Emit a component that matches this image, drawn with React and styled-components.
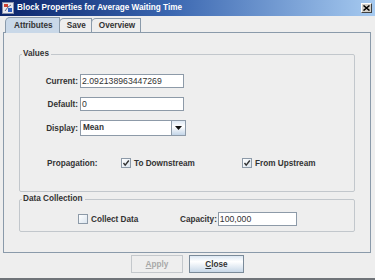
import React from "react";
import styled, { createGlobalStyle } from "styled-components";

const Global = createGlobalStyle`
  html, body { margin: 0; padding: 0; background: #eeeeee; }
  body { font-family: "Liberation Sans", Arial, sans-serif; }
  * { box-sizing: border-box; }
`;

const Window = styled.div`
  width: 375px;
  height: 280px;
  display: flex;
  flex-direction: column;
  background: #eeeeee;
  border-bottom: 2px solid #6f7378;
  overflow: hidden;
`;

const TitleBar = styled.div`
  height: 16px;
  display: flex;
  align-items: center;
  padding: 0 3px 0 2px;
  background: linear-gradient(to right, #0a246a 0%, #3a66b0 45%, #a6caf0 100%);
`;

const TitleText = styled.span`
  flex: 1;
  margin-left: 3px;
  color: #ffffff;
  font-weight: bold;
  font-size: 8.2px;
  line-height: 12px;
  white-space: nowrap;
`;

const CloseBtn = styled.div`
  width: 11px;
  height: 10px;
  display: flex;
  align-items: center;
  justify-content: center;
  background: #d4d0c8;
  border: 1px solid;
  border-color: #ffffff #404040 #404040 #ffffff;
`;

const Body = styled.div`
  flex: 1;
  display: flex;
  flex-direction: column;
  padding: 1px 4px 0 3px;
`;

const TabRow = styled.div`
  display: flex;
  height: 15px;
  padding-left: 2px;
  align-items: flex-end;
`;

const Tab = styled.div`
  padding: 0 ${(p) => p.$pad}px 0 ${(p) => p.$pad + 2}px;
  display: flex;
  align-items: center;
  font-size: 8.2px;
  font-weight: bold;
  color: #333333;
  background: ${(p) => (p.$active ? "#c9d8e8" : "#eeeeee")};
  border: 1px solid #8a9aaa;
  border-bottom: none;
  border-top-left-radius: 5px;
  margin-right: -1px;
  position: relative;
  z-index: ${(p) => (p.$active ? 2 : 1)};
  margin-bottom: ${(p) => (p.$active ? "-1px" : "0")};
  height: ${(p) => (p.$active ? "16px" : "14px")};
`;

const TabPanel = styled.div`
  height: 221px;
  border: 1px solid #8a9aaa;
  background: #eeeeee;
  padding: 16px 15px 0 15px;
  display: flex;
  flex-direction: column;
`;

const Group = styled.fieldset`
  margin: 0;
  border: 1px solid #c2c7cc;
  border-radius: 2px;
  padding: ${(p) => p.$pad};
  min-width: 0;
`;

const Legend = styled.legend`
  margin-left: 2px;
  padding: 0 2px 0 1px;
  font-size: 8.2px;
  line-height: 10px;
  font-weight: bold;
  color: #333333;
`;

const FormGrid = styled.div`
  display: grid;
  grid-template-columns: 58px 104px;
  column-gap: 2px;
  row-gap: 9px;
  align-items: center;
`;

const Label = styled.span`
  font-size: 8.2px;
  font-weight: bold;
  color: #333333;
  text-align: ${(p) => (p.$left ? "left" : "right")};
  white-space: nowrap;
`;

const Field = styled.div`
  height: 14px;
  width: ${(p) => p.$w || "104px"};
  background: #ffffff;
  border: 1px solid #8d9aa8;
  padding-left: 1px;
  font-size: 8.7px;
  line-height: 12px;
  color: #333333;
  white-space: nowrap;
  overflow: hidden;
`;

const Combo = styled.div`
  height: 16px;
  width: 106px;
  display: flex;
  background: #ffffff;
  border: 1px solid #8d9aa8;
`;

const ComboText = styled.span`
  flex: 1;
  padding-left: 2px;
  font-size: 8.2px;
  font-weight: bold;
  line-height: 14px;
  color: #333333;
`;

const ComboArrow = styled.div`
  width: 14px;
  display: flex;
  align-items: center;
  justify-content: center;
  border-left: 1px solid #8d9aa8;
  background: linear-gradient(#dfe9f4, #ffffff 40%, #c3d5e8);
`;

const PropRow = styled.div`
  display: flex;
  align-items: center;
  margin-top: 21px;
  padding-left: 27px;
  height: 12px;
`;

const Cell = styled.div`
  width: ${(p) => p.$w}px;
  flex: none;
  display: flex;
  align-items: center;
`;

const Box = styled.div`
  width: 10px;
  height: 10px;
  flex: none;
  border: 1px solid #8d9aa8;
  background: linear-gradient(135deg, #ffffff, #dbe5ef);
  display: flex;
  align-items: center;
  justify-content: center;
  margin-right: 3px;
`;

const CheckText = styled.span`
  font-size: 8.2px;
  font-weight: bold;
  color: #333333;
  white-space: nowrap;
`;

const DataRow = styled.div`
  display: flex;
  align-items: center;
  padding-left: 58px;
  height: 14px;
`;

const Footer = styled.div`
  display: flex;
  justify-content: center;
  gap: 6px;
  padding-top: 2px;
  padding-left: 1px;
`;

const Button = styled.div`
  width: ${(p) => p.$w}px;
  height: 18px;
  display: flex;
  align-items: center;
  justify-content: center;
  font-size: 8.2px;
  font-weight: bold;
  color: ${(p) => (p.$disabled ? "#a8a8a8" : "#333333")};
  border: 1px solid ${(p) => (p.$disabled ? "#c4c8cc" : "#7a8a99")};
  background: ${(p) =>
    p.$disabled ? "#eeeeee" : "linear-gradient(#dde8f3, #ffffff 35%, #c8d8e8)"};
  u { text-decoration: underline; }
`;

const Check = () => (
  <svg width="8" height="8" viewBox="0 0 8 8">
    <path d="M1.5 4 L3.2 6.2 L6.8 1.5" stroke="#333" strokeWidth="1.4" fill="none" />
  </svg>
);

export default function App() {
  return (
    <>
      <Global />
      <Window>
        <TitleBar>
          <svg width="12" height="12" viewBox="0 0 12 12">
            <rect x="0.5" y="0.5" width="11" height="11" fill="#e8e8f0" stroke="#8890a8" />
            <rect x="2" y="2" width="4" height="3" fill="#d04030" />
            <rect x="6" y="6" width="4" height="4" fill="#3060c0" />
            <path d="M3 9 L6 5 L9 3" stroke="#606880" strokeWidth="1" fill="none" />
          </svg>
          <TitleText>Block Properties for Average Waiting Time</TitleText>
          <CloseBtn>
            <svg width="7" height="6" viewBox="0 0 7 6">
              <path d="M0.5 0.5 L6.5 5.5 M6.5 0.5 L0.5 5.5" stroke="#000" strokeWidth="1.5" />
            </svg>
          </CloseBtn>
        </TitleBar>
        <Body>
          <TabRow>
            <Tab $active $pad={6}>Attributes</Tab>
            <Tab $pad={5}>Save</Tab>
            <Tab $pad={5}>Overview</Tab>
          </TabRow>
          <TabPanel>
            <Group $pad="15px 0 22px 0">
              <Legend>Values</Legend>
              <FormGrid>
                <Label>Current:</Label>
                <Field>2.092138963447269</Field>
                <Label>Default:</Label>
                <Field>0</Field>
                <Label>Display:</Label>
                <Combo>
                  <ComboText>Mean</ComboText>
                  <ComboArrow>
                    <svg width="7" height="4" viewBox="0 0 7 4">
                      <path d="M0 0 H7 L3.5 4 Z" fill="#111" />
                    </svg>
                  </ComboArrow>
                </Combo>
              </FormGrid>
              <PropRow>
                <Cell $w={74}>
                  <Label $left>Propagation:</Label>
                </Cell>
                <Cell $w={121}>
                  <Box><Check /></Box>
                  <CheckText>To Downstream</CheckText>
                </Cell>
                <Cell $w={100}>
                  <Box><Check /></Box>
                  <CheckText>From Upstream</CheckText>
                </Cell>
              </PropRow>
            </Group>
            <Group $pad="8px 0 5px 0" style={{ marginTop: "2px" }}>
              <Legend>Data Collection</Legend>
              <DataRow>
                <Cell $w={102}>
                  <Box />
                  <CheckText>Collect Data</CheckText>
                </Cell>
                <Label>Capacity:</Label>
                <Field $w="79px" style={{ marginLeft: "1px" }}>100,000</Field>
              </DataRow>
            </Group>
          </TabPanel>
          <Footer>
            <Button $w={52} $disabled>
              <span><u>A</u>pply</span>
            </Button>
            <Button $w={55}>
              <span><u>C</u>lose</span>
            </Button>
          </Footer>
        </Body>
      </Window>
    </>
  );
}
